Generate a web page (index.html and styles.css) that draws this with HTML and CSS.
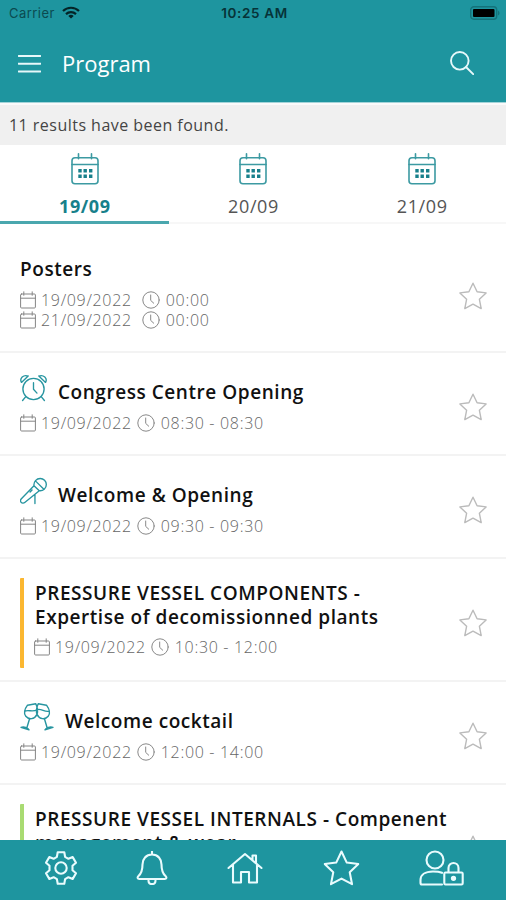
FILE: index.html
```
<!DOCTYPE html>
<html lang="en">
<head>
<meta charset="utf-8">
<title>Program</title>
<link rel="stylesheet" href="styles.css">
</head>
<body>
<svg class="defs" width="0" height="0" aria-hidden="true">
  <symbol id="calendar" viewBox="0 0 30 32">
    <rect x="2" y="4.700" width="26" height="26" rx="3"/>
    <path d="M2 11.500h26M8.500 .800v5M21.500 .800v5"/>
    <path class="dots" d="M8.300 16h3.400v3.400H8.300zM13.500 16h3.400v3.400h-3.400zM19 16h3.400v3.400H19zM8.300 21.600h3.400V25H8.300zM13.500 21.600h3.400V25h-3.400zM19 21.600h3.400V25H19z"/>
  </symbol>
  <symbol id="date" viewBox="0 0 16 18">
    <rect x=".6" y="3" width="14.800" height="14" rx="1"/>
    <path d="M.6 7.200h14.800M3.800 .8v3.500M12.200 .8v3.500"/>
  </symbol>
  <symbol id="clock" viewBox="0 0 18 18">
    <circle cx="9" cy="9" r="8.200"/>
    <path d="M8.700 4v5.400l3 2.800"/>
  </symbol>
  <symbol id="star" viewBox="0 0 28 28">
    <path d="M14 1.200l4.100 8.600 9 1.100-6.700 6.400 1.800 9.300L14 22.200l-8.200 4.400 1.800-9.300L.9 10.900l9-1.100z"/>
  </symbol>
</svg>
<div class="screen">
  <header class="top">
    <div class="status">
      <div class="carrier">Carrier
        <svg class="wifi" viewBox="0 0 18 13"><path d="M1 5a11.500 11.500 0 0 1 16 0M4 8.100a7.200 7.200 0 0 1 10 0"/><path class="solid" d="M9 12.600L6.300 9.900a4 4 0 0 1 5.400 0z"/></svg>
      </div>
      <div class="time">10:25 AM</div>
      <svg class="battery" viewBox="0 0 30 14"><rect class="shell" x=".7" y=".7" width="26" height="12.600" rx="3.200"/><rect x="3" y="3" width="21.500" height="8" rx="1"/><path class="cap" d="M28 4.500q1.600 1 1.600 2.500T28 9.500z"/></svg>
    </div>
    <div class="bar">
      <svg class="menu" viewBox="0 0 22 20"><path d="M0 2h22M0 9.700h22M0 17.500h22"/></svg>
      <h1>Program</h1>
      <svg class="search" viewBox="0 0 24 24"><circle cx="9.800" cy="9.800" r="8.800"/><path d="M16 16l7.200 7.200"/></svg>
    </div>
  </header>
  <div class="results">11 results have been found.</div>
  <nav class="tabs">
    <div class="tab active"><svg><use href="#calendar"/></svg><span>19/09</span></div>
    <div class="tab"><svg><use href="#calendar"/></svg><span>20/09</span></div>
    <div class="tab"><svg><use href="#calendar"/></svg><span>21/09</span></div>
  </nav>
  <main class="list">
    <article class="row posters">
      <div class="body">
        <h2>Posters</h2>
        <div class="meta wide"><svg class="date"><use href="#date"/></svg><span class="day">19/09/2022</span><svg class="clock"><use href="#clock"/></svg><span>00:00</span></div>
        <div class="meta wide"><svg class="date"><use href="#date"/></svg><span class="day">21/09/2022</span><svg class="clock"><use href="#clock"/></svg><span>00:00</span></div>
      </div>
      <svg class="fav"><use href="#star"/></svg>
    </article>
    <article class="row">
      <div class="body">
        <div class="head">
          <svg class="kind" viewBox="0 0 28 28"><circle cx="14" cy="15" r="11"/><path d="M14 8.500v6.800l3.600 4M1.500 8.200C-.8 4 3.500-.2 8.500 1.600M1.500 8.200L8.500 1.600M26.500 8.200C28.800 4 24.500-.2 19.500 1.600M26.500 8.200L19.500 1.600M6 23l-3.300 4M22 23l3.300 4"/></svg>
          <h2>Congress Centre Opening</h2>
        </div>
        <div class="meta"><svg class="date"><use href="#date"/></svg><span class="day">19/09/2022</span><svg class="clock"><use href="#clock"/></svg><span>08:30 - 08:30</span></div>
      </div>
      <svg class="fav"><use href="#star"/></svg>
    </article>
    <article class="row">
      <div class="body">
        <div class="head">
          <svg class="kind" viewBox="0 0 28 28"><path d="M14.500 8.500c-.5-4 2.500-7.500 6.500-7.500 3.500 0 6.300 2.800 6.300 6.200 0 4-3.300 7-7.300 6.500zM16.500 4l8 8M14.500 8.500L1.200 22.300c-1 1.200-.8 2.600 0 3.500s2.600 1.100 3.700.1L20 13.700M14.500 8.500l5.500 5.200M10.500 15l2-2M15.500 17.500V27"/></svg>
          <h2>Welcome &amp; Opening</h2>
        </div>
        <div class="meta"><svg class="date"><use href="#date"/></svg><span class="day">19/09/2022</span><svg class="clock"><use href="#clock"/></svg><span>09:30 - 09:30</span></div>
      </div>
      <svg class="fav"><use href="#star"/></svg>
    </article>
    <article class="row session amber">
      <div class="body">
        <h2>PRESSURE VESSEL COMPONENTS -<br>Expertise of decomissionned plants</h2>
        <div class="meta"><svg class="date"><use href="#date"/></svg><span class="day">19/09/2022</span><svg class="clock"><use href="#clock"/></svg><span>10:30 - 12:00</span></div>
      </div>
      <svg class="fav"><use href="#star"/></svg>
    </article>
    <article class="row">
      <div class="body">
        <div class="head">
          <svg class="kind glasses" viewBox="0 0 34 28"><path d="M7.500 2.200l8.300-1.400c2 4.500 2.200 8.300 1 10.800-2.200 4.800-8 5.400-11 1.700-2.800-3.500-1.300-7 1.700-11.100zM4.800 8.200c4-2 7.500 1.600 12.300-1.600M9.500 16L6.800 25M1 24.300l8 2.600c-1-2.300-5-3.500-8-2.600zM26.500 2.200L18.200.8c-2 4.500-2.200 8.300-1 10.800 2.200 4.800 8 5.400 11 1.700 2.800-3.500 1.300-7-1.700-11.100zM17 6.600c4.500-1.500 7.500 3 12.200 1.600M24.500 16l2.700 9M33 24.300l-8 2.600c1-2.300 5-3.500 8-2.600z"/></svg>
          <h2>Welcome cocktail</h2>
        </div>
        <div class="meta"><svg class="date"><use href="#date"/></svg><span class="day">19/09/2022</span><svg class="clock"><use href="#clock"/></svg><span>12:00 - 14:00</span></div>
      </div>
      <svg class="fav"><use href="#star"/></svg>
    </article>
    <article class="row session green">
      <div class="body">
        <h2>PRESSURE VESSEL INTERNALS - Compenent<br>management &amp; wear</h2>
        <div class="meta"><svg class="date"><use href="#date"/></svg></div>
      </div>
      <svg class="fav"><use href="#star"/></svg>
    </article>
  </main>
  <footer class="dock">
    <svg class="gear" viewBox="0 0 34 34"><circle cx="17" cy="17" r="5.700"/><path d="M13.700 1.300h6.600l.8 4.600 3.300 1.900 4.300-1.700 3.300 5.700-3.500 3v4.400l3.500 3-3.300 5.700-4.300-1.700-3.300 1.900-.8 4.600h-6.600l-.8-4.600-3.300-1.900-4.300 1.700L2 22.200l3.500-3v-4.400l-3.500-3 3.300-5.700 4.300 1.700 3.300-1.900z"/></svg>
    <svg class="bell" viewBox="0 0 32 34"><path d="M16 .500v3M16 3.500c-6 0-9.500 4.500-9.500 10 0 7-1.500 9.300-4 11.500-1.500 1.500-1 3 .8 3h25.400c1.800 0 2.300-1.500.8-3-2.500-2.200-4-4.500-4-11.500 0-5.500-3.500-10-9.500-10zM12.500 29.500c0 4.800 7 4.800 7 0"/></svg>
    <svg class="home" viewBox="0 0 36 32"><path d="M1.500 16L18 2l16.500 14M6 13v17.500h8V20h8v10.500h8V13M25.500 8V3.500H29V11"/></svg>
    <svg class="dockstar" viewBox="0 0 28 28"><use href="#star" width="28" height="28"/></svg>
    <svg class="user" viewBox="0 0 45 36"><circle cx="16" cy="10" r="8.500"/><path d="M23 22.800C21 22 17.500 21.500 14 21.500 6 21.500 1.500 25 1.500 30v3c0 1 .5 1.500 1.500 1.500h20M26.500 22.500h16c.7 0 1.200.5 1.200 1.200v9.600c0 .7-.5 1.200-1.200 1.200h-16c-.7 0-1.200-.5-1.200-1.200v-9.600c0-.7.500-1.200 1.200-1.200zM29.500 22.500V18c0-6.700 10-6.700 10 0v4.500"/><circle class="hole" cx="34.500" cy="28.300" r="1.600"/></svg>
  </footer>
</div>
</body>
</html>
```
FILE: styles.css
```
* { box-sizing: border-box; }
body {
  margin: 0;
  background: #fff;
  color: #111;
  font-family: "Open Sans", "Noto Sans", sans-serif;
}
svg { display: block; flex: none; fill: none; stroke: currentColor; stroke-linecap: round; stroke-linejoin: round; }
h1, h2 { margin: 0; white-space: nowrap; }
.defs { position: absolute; }
.screen { display: flex; flex-direction: column; width: 506px; height: 900px; overflow: hidden; }

.top { height: 103px; flex: none; background: #1e959f; border-bottom: 1px solid #a4d4d9; color: #fff; }
.status {
  display: grid;
  grid-template-columns: 1fr auto 1fr;
  align-items: center;
  height: 26px;
  padding: 0 6px 0 9px;
  font-family: Inter, sans-serif;
  font-size: 13px;
  color: #0b4a50;
}
.carrier { display: flex; align-items: center; gap: 7px; letter-spacing: .45px; }
.wifi { width: 18px; height: 13px; margin-top: -2px; stroke: #042426; stroke-width: 2.2; stroke-linecap: butt; }
.wifi .solid { fill: #042426; stroke: none; }
.time { font-size: 13.500px; font-weight: 600; letter-spacing: .65px; color: #063338; }
.battery { width: 30px; height: 14px; justify-self: end; fill: #000; stroke: none; }
.battery .shell { fill: none; stroke: #14737b; stroke-width: 1.4; }
.battery .cap { fill: #14737b; }
.bar { display: flex; align-items: center; height: 74px; padding: 0 32px 0 18px; }
.menu { width: 23px; height: 20px; margin-top: 2px; stroke-width: 1.9; color: #e6f8fa; }
h1 { margin-left: 21px; font-size: 22px; font-weight: 400; letter-spacing: 0; color: #fff; }
.search { width: 24px; height: 24px; margin-left: auto; stroke-width: 1.9; color: #e6f8fa; }

.results {
  flex: none;
  height: 42px;
  padding: 2px 9px 0;
  border-top: 2px solid #fafafa;
  background: #f0f0f0;
  font-size: 16px;
  line-height: 37px;
  letter-spacing: .47px;
  color: #444;
}

.tabs { display: grid; grid-template-columns: repeat(3, 1fr); flex: none; height: 79px; }
.tab {
  display: flex;
  flex-direction: column;
  align-items: center;
  padding: 8px 0 0 1px;
  border-bottom: 2px solid #f7f7f7;
  font-size: 18px;
  letter-spacing: .6px;
  line-height: 26px;
  color: #555;
}
.tab svg { width: 30px; height: 32px; margin-bottom: 8px; color: #3c9aa2; stroke-width: 1.6; }
.dots { fill: #17808b; stroke: none; }
.tab.active { border-bottom: 3px solid #4aa7ae; color: #17808b; font-weight: 700; }

.list { flex: 1; min-height: 0; overflow: hidden; }
.row {
  display: flex;
  align-items: center;
  justify-content: space-between;
  height: 103px;
  padding: 7px 18px 0 20px;
  border-bottom: 2px solid #f3f3f3;
}
.body { margin-bottom: 2px; }
.row.posters { height: 129px; padding-top: 16px; }
.posters .body { margin-bottom: 4px; }
.head { display: flex; align-items: center; gap: 11px; }
.kind { width: 27px; height: 28px; margin-top: -8px; color: #2795a0; stroke-width: 1.4; }
.glasses { width: 34px; }
h2 { font-size: 19px; font-weight: 600; line-height: 24px; letter-spacing: .55px; }
.meta { display: flex; align-items: center; height: 20px; margin-top: 9px; font-size: 16px; font-weight: 300; letter-spacing: .68px; color: #666; }
.meta .date { width: 16px; height: 18px; margin-right: 5px; color: #858585; }
.meta .clock { width: 18px; height: 18px; margin: 0 6px 0 5px; color: #888; }
.meta.wide .clock { margin-left: 10px; }
.posters .meta + .meta { margin-top: 0; }
.fav { width: 30px; height: 28px; color: #bbb; stroke-width: 1.4; }
.session { height: 123px; }
.session .body { height: 90px; margin: 0; padding: 4px 0 0 11px; border-left: 4px solid #fbb731; border-radius: 1px; }
.session h2 { line-height: 23.500px; }
.session .meta { margin: 8px 0 0 -1px; }
.session.green .body { border-color: #a9db72; }

.dock {
  display: flex;
  align-items: center;
  justify-content: space-between;
  flex: none;
  height: 60px;
  padding: 0 42px 5px 44px;
  background: #1e959f;
  color: #e9fbfd;
}
.gear { width: 34px; height: 34px; stroke-width: 2.1; }
.bell { width: 32px; height: 34px; margin: 0 1px 0 -1px; stroke-width: 2.1; }
.home { width: 36px; height: 32px; margin: 0 1px 0 -1px; stroke-width: 2.1; }
.dockstar { width: 37px; height: 36px; stroke-width: 1.600; }
.user { width: 45px; height: 36px; stroke-width: 2.1; }
.user .hole { fill: currentColor; }
```
